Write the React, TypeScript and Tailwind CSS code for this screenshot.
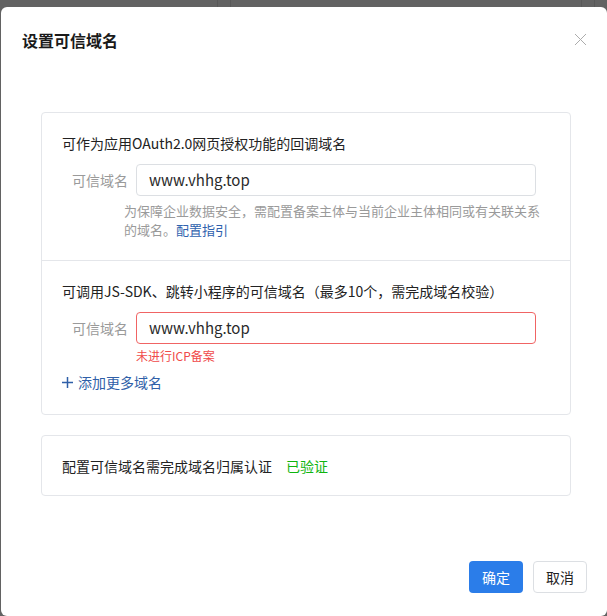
import React from "react";

const font = { fontFamily: '"Noto Sans CJK SC", "Noto Sans", sans-serif' };

export default function App() {
  return (
    <div
      className="relative w-[607px] h-[616px] overflow-hidden bg-[#626262]"
      style={font}
    >
      {/* faint background lines behind overlay */}
      <div className="absolute left-[217px] top-0 h-[7px] w-px bg-[#585858]" />
      <div className="absolute left-[230px] top-0 h-[7px] w-px bg-[#585858]" />
      <div className="absolute left-[581px] top-0 h-[7px] w-px bg-[#585858]" />
      <div className="absolute left-[594px] top-0 h-[7px] w-px bg-[#585858]" />

      <div className="ml-[1px] mt-[7px] flex h-[609px] w-[606px] flex-col rounded-[6px] bg-white">
        {/* header */}
        <div className="flex items-center justify-between pl-[21px] pr-[20px] pt-[21px]">
          <div className="text-[16px] font-bold leading-[24px] text-[#1a1a1a]">
            设置可信域名
          </div>
          <svg width="13" height="13" viewBox="0 0 13 13" className="mt-[-1px]">
            <path
              d="M1 1 L12 12 M12 1 L1 12"
              stroke="#acacac"
              strokeWidth="1"
              fill="none"
            />
          </svg>
        </div>

        {/* card 1 */}
        <div className="ml-[40px] mt-[60px] w-[530px] rounded-[4px] border border-[#e4e6ea]">
          <div className="px-[20px] pt-[20px] pb-[21px]">
            <div className="text-[14px] leading-[20px] text-[#222]">
              可作为应用OAuth2.0网页授权功能的回调域名
            </div>
            <div className="mt-[11px] flex items-center">
              <div className="w-[66px] text-right text-[14px] leading-[20px] text-[#9a9a9a]">
                可信域名
              </div>
              <div className="ml-[8px] flex h-[32px] w-[400px] items-center rounded-[4px] border border-[#dcdfe3] px-[12px] text-[15px] text-[#2a2a2a]">
                www.vhhg.top
              </div>
            </div>
            <div className="ml-[62px] mt-[5px] w-[418px] text-[13px] leading-[19px] text-[#9a9a9a]">
              <div>为保障企业数据安全，需配置备案主体与当前企业主体相同或有关联关系</div>
              <div className="flex">
                <span>的域名。</span>
                <span className="text-[#2f62ae]">配置指引</span>
              </div>
            </div>
          </div>
          <div className="border-t border-[#e4e6ea] px-[20px] pt-[20px] pb-[22px]">
            <div className="text-[14px] leading-[20px] text-[#222]">
              可调用JS-SDK、跳转小程序的可信域名（最多10个，需完成域名校验）
            </div>
            <div className="mt-[11px] flex items-center">
              <div className="w-[66px] text-right text-[14px] leading-[20px] text-[#9a9a9a]">
                可信域名
              </div>
              <div className="ml-[8px] flex h-[32px] w-[400px] items-center rounded-[4px] border border-[#f06464] px-[12px] text-[15px] text-[#2a2a2a]">
                www.vhhg.top
              </div>
            </div>
            <div className="ml-[74px] mt-[4px] text-[12px] leading-[16px] text-[#f04a4a]">
              未进行ICP备案
            </div>
            <div className="mt-[8px] flex items-center gap-[5px] text-[14px] leading-[20px] text-[#2f5fa8]">
              <svg width="11" height="11" viewBox="0 0 11 11">
                <path
                  d="M5.5 0 V11 M0 5.5 H11"
                  stroke="#2f5fa8"
                  strokeWidth="1.5"
                  fill="none"
                />
              </svg>
              <span>添加更多域名</span>
            </div>
          </div>
        </div>

        {/* card 2 */}
        <div className="ml-[40px] mt-[20px] flex h-[61px] w-[530px] items-center rounded-[4px] border border-[#e4e6ea] px-[20px]">
          <span className="text-[14px] leading-[20px] text-[#222]">
            配置可信域名需完成域名归属认证
          </span>
          <span className="ml-[14px] text-[14px] leading-[20px] text-[#0fb40f]">
            已验证
          </span>
        </div>

        {/* footer */}
        <div className="mt-auto flex justify-end gap-[10px] pb-[23px] pr-[20px]">
          <button className="h-[32px] w-[54px] rounded-[4px] bg-[#2b7de9] text-[14px] text-white">
            确定
          </button>
          <button className="h-[32px] w-[54px] rounded-[4px] border border-[#dcdfe3] bg-white text-[14px] text-[#222]">
            取消
          </button>
        </div>
      </div>
    </div>
  );
}
